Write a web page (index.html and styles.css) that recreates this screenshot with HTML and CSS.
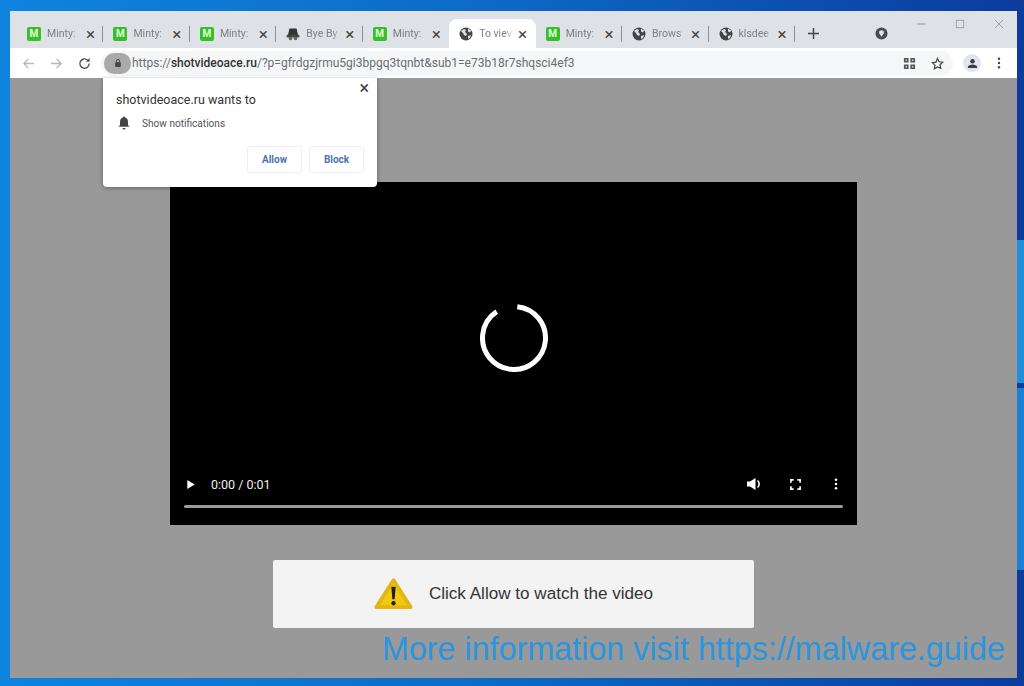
FILE: index.html
```html
<!DOCTYPE html>
<html lang="en">
<head>
  <meta charset="UTF-8">
  <title>To view</title>
  <link rel="stylesheet" href="styles.css">
</head>
<body>
  <div class="window">
    <!-- Tab strip -->
    <div class="tabstrip">
      <div class="tab"><span class="fav-m">M</span><span class="tab-title">Minty:</span><span class="tab-x">×</span></div>
      <div class="tab"><span class="fav-m">M</span><span class="tab-title">Minty:</span><span class="tab-x">×</span></div>
      <div class="tab"><span class="fav-m">M</span><span class="tab-title">Minty:</span><span class="tab-x">×</span></div>
      <div class="tab">
        <svg class="fav" viewBox="0 0 14 14"><path d="M3.500 1.500h7L12 8H2z" fill="#333"/><rect x="0.500" y="7.500" width="13" height="3" rx="1.500" fill="#444"/><circle cx="4.500" cy="11.500" r="1.800" fill="#666"/><circle cx="9.500" cy="11.500" r="1.800" fill="#666"/></svg>
        <span class="tab-title">Bye By</span><span class="tab-x">×</span>
      </div>
      <div class="tab no-sep"><span class="fav-m">M</span><span class="tab-title">Minty:</span><span class="tab-x">×</span></div>
      <div class="tab active no-sep">
        <svg class="fav" viewBox="0 0 14 14"><use href="#globe"/></svg>
        <span class="tab-title">To viev</span><span class="tab-x">×</span>
      </div>
      <div class="tab"><span class="fav-m">M</span><span class="tab-title">Minty:</span><span class="tab-x">×</span></div>
      <div class="tab">
        <svg class="fav" viewBox="0 0 14 14"><use href="#globe"/></svg>
        <span class="tab-title">Brows</span><span class="tab-x">×</span>
      </div>
      <div class="tab">
        <svg class="fav" viewBox="0 0 14 14"><use href="#globe"/></svg>
        <span class="tab-title">klsdee</span><span class="tab-x">×</span>
      </div>
      <svg class="new-tab" viewBox="0 0 12 12"><path d="M6 0v12M0 6h12" stroke="#444" stroke-width="1.600"/></svg>
      <svg class="media-btn" viewBox="0 0 14 14"><circle cx="7" cy="7" r="6.500" fill="#4a4a4a"/><path d="M7 10.500L4.600 7a2.600 2.600 0 1 1 4.800 0z" fill="#dee1e6"/></svg>
      <div class="win-controls">
        <svg viewBox="0 0 12 12"><path d="M1 6h10" stroke="#888"/></svg>
        <svg viewBox="0 0 12 12"><rect x="1.500" y="1.500" width="9" height="9" fill="none" stroke="#999"/></svg>
        <svg viewBox="0 0 12 12"><path d="M1 1l10 10M11 1L1 11" stroke="#999"/></svg>
      </div>
    </div>

    <!-- Toolbar -->
    <div class="toolbar">
      <svg class="nav-icon" viewBox="0 0 14 14"><path d="M13 7H2M7 2L2 7l5 5" fill="none" stroke="#b4b7bb" stroke-width="1.400"/></svg>
      <svg class="nav-icon" viewBox="0 0 14 14"><path d="M1 7h11M7 2l5 5-5 5" fill="none" stroke="#b4b7bb" stroke-width="1.400"/></svg>
      <svg class="nav-icon" viewBox="0 0 14 14"><path d="M12 7a5 5 0 1 1-1.500-3.500" fill="none" stroke="#555" stroke-width="1.500"/><path d="M12.500 1v4.200H8.300z" fill="#555"/></svg>
      <div class="omnibox">
        <div class="lock-pill">
          <svg viewBox="0 0 10 12"><path d="M3 5V3.500a2 2 0 0 1 4 0V5" fill="none" stroke="#444" stroke-width="1.200"/><rect x="1.500" y="5" width="7" height="6" rx="1" fill="#444"/></svg>
        </div>
        <div class="url">https://<b>shotvideoace.ru</b>/?p=gfrdgzjrmu5gi3bpgq3tqnbt&amp;sub1=e73b18r7shqsci4ef3</div>
        <svg class="omni-icon" viewBox="0 0 14 14"><path d="M1 1h5v5H1zM8 1h5v5H8zM1 8h5v5H1zM8 8h5v5H8z" fill="#555"/><path d="M2.800 2.800h1.400v1.400H2.800zM9.800 2.800h1.400v1.400H9.800zM2.800 9.800h1.400v1.400H2.800zM9.800 9.800h1.400v1.400H9.800z" fill="#ddd"/></svg>
        <svg class="omni-icon star" viewBox="0 0 14 14"><path d="M7 1.500l1.700 3.600 3.900.5-2.900 2.700.8 3.900L7 10.800l-3.500 1.900.8-3.900-2.900-2.700 3.900-.5z" fill="none" stroke="#444" stroke-width="1.300"/></svg>
      </div>
      <div class="avatar">
        <svg viewBox="0 0 12 12"><circle cx="6" cy="3.500" r="2.500" fill="#3c4043"/><path d="M1 11V9.500C1 8 4 7 6 7s5 1 5 2.500V11z" fill="#3c4043"/></svg>
      </div>
      <svg class="menu-dots" viewBox="0 0 4 14"><circle cx="2" cy="2" r="1.400" fill="#444"/><circle cx="2" cy="7" r="1.400" fill="#444"/><circle cx="2" cy="12" r="1.400" fill="#444"/></svg>
    </div>

    <!-- Page -->
    <div class="page">
      <div class="video">
        <svg class="spinner" viewBox="0 0 68 68"><circle cx="34" cy="34" r="31.500" fill="none" stroke="#fff" stroke-width="5" stroke-dasharray="176 22" transform="rotate(-84 34 34)"/></svg>
        <div class="controls">
          <div class="controls-row">
            <svg class="play" viewBox="0 0 10 12"><path d="M1 1l8 5-8 5z" fill="#fff"/></svg>
            <span class="time">0:00 / 0:01</span>
            <svg class="ctl vol" viewBox="0 0 14 14"><path d="M0 4.500h3L8.500 1v12L3 9.500H0z" fill="#fff"/><path d="M10.500 3.500a4.500 4.500 0 0 1 0 7" fill="none" stroke="#fff" stroke-width="1.600"/></svg>
            <svg class="ctl full" viewBox="0 0 12 12"><path d="M1 4V1h3M8 1h3v3M11 8v3H8M4 11H1V8" fill="none" stroke="#fff" stroke-width="1.800"/></svg>
            <svg class="ctl dots" viewBox="0 0 4 14"><circle cx="2" cy="2" r="1.500" fill="#fff"/><circle cx="2" cy="7" r="1.500" fill="#fff"/><circle cx="2" cy="12" r="1.500" fill="#fff"/></svg>
          </div>
          <div class="timeline"></div>
        </div>
      </div>

      <div class="notice">
        <svg class="warn" viewBox="0 0 40 34"><path d="M20 3L37.500 30.500H2.500z" fill="#f2c811" stroke="#e2b714" stroke-width="4" stroke-linejoin="round"/><path d="M17.800 9.500h4.400l-1 13h-2.400z" fill="#222"/><circle cx="20" cy="26.500" r="2.200" fill="#222"/></svg>
        <span>Click Allow to watch the video</span>
      </div>

      <!-- Permission popup -->
      <div class="popup">
        <span class="popup-x">×</span>
        <div class="popup-title">shotvideoace.ru wants to</div>
        <div class="popup-row">
          <svg viewBox="0 0 12 14"><path d="M6 0.500c.7 0 1 .5 1 1C9 2 10 3.500 10 6v3l1.500 1.800H.5L2 9V6c0-2.500 1-4 3-4.500 0-.5.300-1 1-1z" fill="#444"/><path d="M4.500 12h3a1.500 1.500 0 0 1-3 0z" fill="#444"/></svg>
          <span>Show notifications</span>
        </div>
        <div class="popup-btns">
          <button class="popup-btn">Allow</button>
          <button class="popup-btn">Block</button>
        </div>
      </div>

      <div class="watermark">More information visit https://malware.guide</div>
    </div>
  </div>

  <!-- Shared globe icon -->
  <svg class="defs" width="0" height="0">
    <symbol id="globe" viewBox="0 0 14 14">
      <circle cx="7" cy="7" r="6.500" fill="#444"/>
      <path d="M2 4l3-2 2 1-1 2 2 2-1 2-2-1-1-2zM9 1.500l3 2-1 2-2-1zM9 9l3-1-1 3-2 1z" fill="#dee1e6"/>
    </symbol>
  </svg>
</body>
</html>
```

FILE: styles.css
```css
/* General */
html, body {
  height: 100%;
}

body {
  margin: 0;
  padding: 11px 7px 8px 10px;
  box-sizing: border-box;
  overflow: hidden;
  font-family: "Liberation Sans", Arial, sans-serif;
  /* desktop wallpaper: lighter bar on the right edge, then the blue sweep */
  background:
    linear-gradient(180deg, transparent 240px, #1f8fdc 240px, #1f8fdc 383px, #0b3f9e 383px, #0b3f9e 388px, #1b7fd6 388px, #1b7fd6 570px, transparent 570px) right top / 7px 100% no-repeat,
    linear-gradient(90deg, #0f84de 0%, #0d6cc8 45%, #0b3c9c 100%);
}

.window {
  height: 100%;
  display: flex;
  flex-direction: column;
  background: #fff;
}

/* Tabs */
.tabstrip {
  height: 37px;
  flex: none;
  display: flex;
  align-items: flex-end;
  padding-left: 7px;
  background: #dee1e6;
  position: relative;
}

.tab {
  width: 86.450px;
  height: 29px;
  flex: none;
  box-sizing: border-box;
  display: flex;
  align-items: center;
  padding: 0 7px 0 10px;
  position: relative;
  font-family: Roboto, "Liberation Sans", sans-serif;
  font-size: 10.500px;
  color: #7c8085;
}

.tab::after {
  content: "";
  position: absolute;
  right: 0;
  top: 7px;
  height: 16px;
  width: 1px;
  background: #8d9095;
}

.tab.no-sep::after {
  display: none;
}

.tab.active {
  background: #fff;
  border-radius: 8px 8px 0 0;
}

.fav-m {
  width: 14px;
  height: 14px;
  flex: none;
  border-radius: 2px;
  background: #35c02b;
  color: #e6ffd8;
  font-size: 10px;
  font-weight: bold;
  line-height: 14px;
  text-align: center;
}

.fav {
  width: 14px;
  height: 14px;
  flex: none;
}

.tab-title {
  flex: 1;
  margin-left: 6px;
  overflow: hidden;
  white-space: nowrap;
  -webkit-mask-image: linear-gradient(90deg, #000 70%, transparent 90%);
  mask-image: linear-gradient(90deg, #000 70%, transparent 90%);
}

.tab-x {
  width: 12px;
  flex: none;
  font-size: 17px;
  line-height: 14px;
  text-align: center;
  color: #444;
}

.new-tab {
  width: 11px;
  height: 11px;
  margin: 0 0 9px 13px;
  flex: none;
}

.media-btn {
  width: 13px;
  height: 13px;
  margin: 0 0 8px 56px;
  flex: none;
}

.win-controls {
  align-self: flex-start;
  display: flex;
  gap: 29px;
  margin: 8px 0 0 28px;
}

.win-controls svg {
  width: 10px;
  height: 10px;
}

/* Toolbar */
.toolbar {
  height: 30px;
  flex: none;
  display: flex;
  align-items: center;
  padding-left: 12px;
  background: #fff;
}

.nav-icon {
  width: 13px;
  height: 13px;
  flex: none;
  margin-right: 15px;
}

.omnibox {
  width: 852px;
  height: 25px;
  flex: none;
  margin-left: -5px;
  display: flex;
  align-items: center;
  border-radius: 13px;
  background: #f5f6f7;
}

.lock-pill {
  width: 27px;
  height: 21px;
  flex: none;
  margin-left: 3px;
  border-radius: 10px;
  background: #a9a9a9;
  display: flex;
  align-items: center;
  justify-content: center;
}

.lock-pill svg {
  width: 8px;
  height: 10px;
}

.url {
  flex: 1;
  margin-left: 1px;
  font-family: Roboto, "Liberation Sans", sans-serif;
  font-size: 12px;
  color: #6b6e72;
  white-space: nowrap;
}

.url b {
  font-weight: 500;
  color: #333;
}

.omni-icon {
  width: 13px;
  height: 13px;
  flex: none;
  margin-right: 15px;
}

.omni-icon.star {
  margin-right: 9px;
}

.avatar {
  width: 18px;
  height: 18px;
  flex: none;
  margin-left: 10px;
  border-radius: 50%;
  background: #e1e3ee;
  display: flex;
  align-items: center;
  justify-content: center;
}

.avatar svg {
  width: 11px;
  height: 11px;
}

.menu-dots {
  width: 4px;
  height: 12px;
  flex: none;
  margin-left: 16px;
}

/* Page */
.page {
  flex: 1;
  position: relative;
  display: flex;
  flex-direction: column;
  align-items: center;
  background: #999;
}

.video {
  width: 687px;
  height: 343px;
  flex: none;
  margin-top: 104px;
  position: relative;
  display: flex;
  flex-direction: column;
  justify-content: flex-end;
  background: #000;
}

.spinner {
  position: absolute;
  left: 310px;
  top: 122px;
  width: 68px;
  height: 68px;
}

.controls {
  padding: 0 14px 17px;
}

.controls-row {
  display: flex;
  align-items: center;
  height: 16px;
  margin-bottom: 13px;
}

.play {
  width: 10px;
  height: 11px;
  margin-left: 2px;
}

.time {
  flex: 1;
  margin-left: 15px;
  font-family: Roboto, "Liberation Sans", sans-serif;
  font-size: 12.500px;
  color: #eee;
}

.ctl {
  flex: none;
}

.vol {
  width: 14px;
  height: 14px;
}

.full {
  width: 11px;
  height: 11px;
  margin-left: 29px;
}

.dots {
  width: 4px;
  height: 12px;
  margin: 0 5px 0 33px;
}

.timeline {
  height: 3px;
  border-radius: 2px;
  background: #9a9a9a;
}

/* Notice box */
.notice {
  width: 481px;
  height: 68px;
  flex: none;
  margin-top: 35px;
  display: flex;
  align-items: center;
  justify-content: center;
  gap: 16px;
  border-radius: 2px;
  background: #f3f3f3;
  font-size: 17.100px;
  color: #333;
}

.warn {
  width: 39px;
  height: 34px;
  flex: none;
}

/* Popup */
.popup {
  position: absolute;
  left: 93px;
  top: 0;
  width: 274px;
  height: 109px;
  box-sizing: border-box;
  padding: 14px 13px 0;
  border-radius: 0 0 4px 4px;
  background: #fff;
  box-shadow: 0 1px 4px rgba(0, 0, 0, 0.35);
  font-family: Roboto, "Liberation Sans", sans-serif;
  color: #333;
}

.popup-x {
  position: absolute;
  right: 8px;
  top: 1px;
  font-size: 18px;
  line-height: 18px;
  color: #444;
}

.popup-title {
  font-size: 12.500px;
}

.popup-row {
  display: flex;
  align-items: center;
  margin-top: 9px;
  font-size: 10.100px;
  color: #555;
}

.popup-row svg {
  width: 12px;
  height: 14px;
  margin-right: 12px;
  margin-left: 2px;
}

.popup-btns {
  display: flex;
  justify-content: flex-end;
  gap: 7px;
  margin-top: 16px;
}

.popup-btn {
  width: 55px;
  height: 27px;
  padding: 0;
  border: 1px solid #eceef1;
  border-radius: 3px;
  background: #fff;
  font-family: Roboto, "Liberation Sans", sans-serif;
  font-size: 10px;
  font-weight: 700;
  color: #4a74b4;
}

.watermark {
  position: absolute;
  left: 372px;
  top: 552px;
  font-size: 32.300px;
  line-height: 38px;
  white-space: nowrap;
  color: #2b95dd;
}

.defs {
  position: absolute;
}
```
